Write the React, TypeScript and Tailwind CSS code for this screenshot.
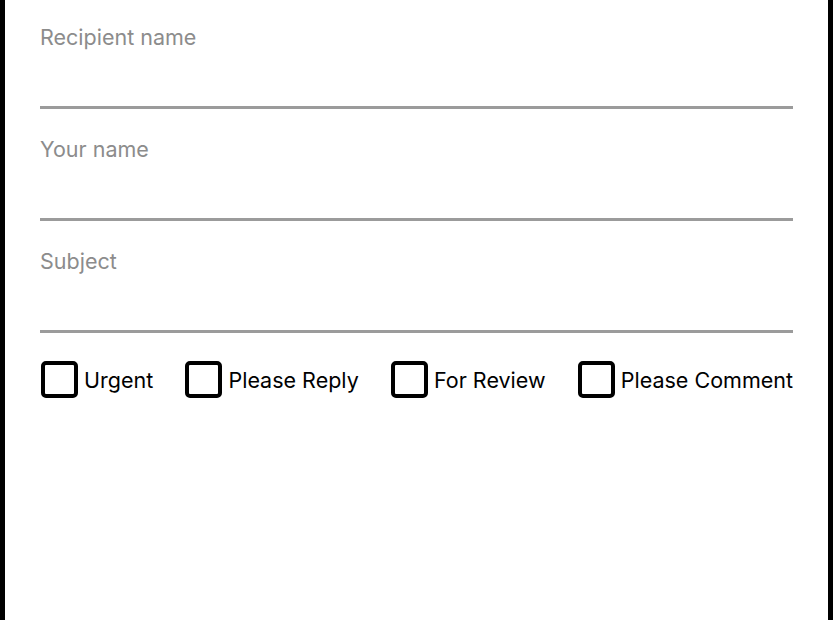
import React from "react";

const fields = ["Recipient name", "Your name", "Subject"];
const checks = ["Urgent", "Please Reply", "For Review", "Please Comment"];

export default function App() {
  return (
    <div
      className="min-h-[620px] border-x-[5px] border-black bg-white px-[35px] pt-[23px]"
      style={{ fontFamily: "Inter, 'Liberation Sans', sans-serif" }}
    >
      <div className="flex flex-col gap-[26px]">
        {fields.map((f) => (
          <label key={f} className="flex flex-col border-b-[3px] border-[#9b9b9b]">
            <span className="text-[21.5px] leading-[28px] text-[#8c8c8c]">{f}</span>
            <input className="h-[55px] bg-transparent text-[20px] outline-none" />
          </label>
        ))}
      </div>
      <div className="mt-[28px] flex items-center justify-between pl-px">
        {checks.map((c) => (
          <label key={c} className="flex items-center gap-[6px]">
            <span className="block h-[37px] w-[37px] rounded-[5px] border-[4px] border-black" />
            <span className="text-[21.5px] leading-[28px] text-black">{c}</span>
          </label>
        ))}
      </div>
    </div>
  );
}
